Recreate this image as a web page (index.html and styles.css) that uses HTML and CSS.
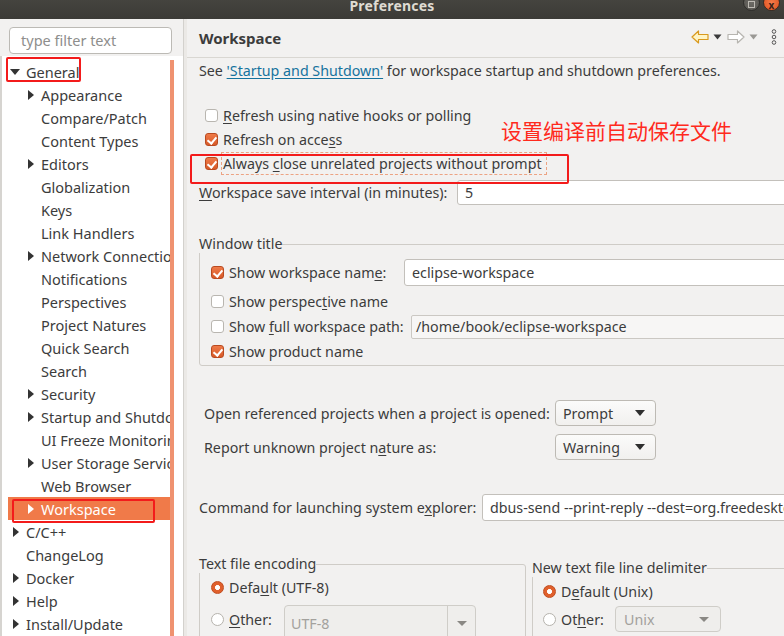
FILE: index.html
```html
<!DOCTYPE html>
<html lang="en">
<head>
<meta charset="utf-8">
<title>Preferences</title>
<link rel="stylesheet" href="styles.css">
</head>
<body>
<div class="window">
  <div class="titlebar">
    <span class="title">Preferences</span>
    <div class="wm-buttons">
      <span class="wm-btn wm-max"><span class="wm-square"></span></span>
      <span class="wm-btn wm-close">x</span>
    </div>
  </div>
  <div class="main">
    <aside class="sidebar">
      <div class="filter-area"><div class="filter">type filter text</div></div>
      <div class="tree">
        <ul class="rows">
          <li class="row l0 open"><span class="tw"></span>General</li>
          <li class="row l1"><span class="tw"></span>Appearance</li>
          <li class="row l1"><span class="tw none"></span>Compare/Patch</li>
          <li class="row l1"><span class="tw none"></span>Content Types</li>
          <li class="row l1"><span class="tw"></span>Editors</li>
          <li class="row l1"><span class="tw none"></span>Globalization</li>
          <li class="row l1"><span class="tw none"></span>Keys</li>
          <li class="row l1"><span class="tw none"></span>Link Handlers</li>
          <li class="row l1"><span class="tw"></span>Network Connections</li>
          <li class="row l1"><span class="tw none"></span>Notifications</li>
          <li class="row l1"><span class="tw none"></span>Perspectives</li>
          <li class="row l1"><span class="tw none"></span>Project Natures</li>
          <li class="row l1"><span class="tw none"></span>Quick Search</li>
          <li class="row l1"><span class="tw none"></span>Search</li>
          <li class="row l1"><span class="tw"></span>Security</li>
          <li class="row l1"><span class="tw"></span>Startup and Shutdown</li>
          <li class="row l1"><span class="tw none"></span>UI Freeze Monitoring</li>
          <li class="row l1"><span class="tw"></span>User Storage Service</li>
          <li class="row l1"><span class="tw none"></span>Web Browser</li>
          <li class="row l1 selected"><span class="tw"></span>Workspace</li>
          <li class="row l0"><span class="tw"></span>C/C++</li>
          <li class="row l0"><span class="tw none"></span>ChangeLog</li>
          <li class="row l0"><span class="tw"></span>Docker</li>
          <li class="row l0"><span class="tw"></span>Help</li>
          <li class="row l0"><span class="tw"></span>Install/Update</li>
        </ul>
        <div class="vscroll"></div>
      </div>
    </aside>
    <div class="sash"></div>
    <section class="page">
      <div class="page-header">
        <span class="page-title">Workspace</span>
        <div class="toolbar">
          <svg class="tb-arrow" width="18" height="14" viewBox="0 0 18 14"><path d="M1 7 L7.5 1 V4.5 H17 V9.5 H7.5 V13 Z" fill="#fff4c4" stroke="#d99a1e" stroke-width="1.2" stroke-linejoin="round"/></svg>
          <svg class="tb-drop" width="9" height="6" viewBox="0 0 9 6"><path d="M0.5 0.5 H8.5 L4.5 5.5 Z" fill="#3a3a3a"/></svg>
          <svg class="tb-arrow" width="18" height="14" viewBox="0 0 18 14"><path d="M17 7 L10.5 1 V4.5 H1 V9.5 H10.5 V13 Z" fill="#ffffff" stroke="#b7b5b0" stroke-width="1.2" stroke-linejoin="round"/></svg>
          <svg class="tb-drop" width="9" height="6" viewBox="0 0 9 6"><path d="M0.5 0.5 H8.5 L4.5 5.5 Z" fill="#9a9894"/></svg>
          <svg class="tb-menu" width="6" height="16" viewBox="0 0 6 16"><circle cx="3" cy="2.5" r="1.8" fill="none" stroke="#555" stroke-width="1"/><circle cx="3" cy="8" r="1.8" fill="none" stroke="#555" stroke-width="1"/><circle cx="3" cy="13.5" r="1.8" fill="none" stroke="#555" stroke-width="1"/></svg>
        </div>
      </div>
      <div class="content">
        <p class="see">See <a class="link">'Startup and Shutdown'</a> for workspace startup and shutdown preferences.</p>
        <div class="checks">
          <div class="ck-row"><span class="cb"></span><span><u>R</u>efresh using native hooks or polling</span></div>
          <div class="ck-row"><span class="cb on"></span><span>Refresh on acce<u>s</u>s</span></div>
          <div class="ck-row"><span class="cb on"></span><span class="focus">Always <u>c</u>lose unrelated projects without prompt</span></div>
        </div>
        <div class="save-row">
          <span class="save-label"><u>W</u>orkspace save interval (in minutes):</span>
          <span class="input save-input">5</span>
        </div>
        <fieldset class="group wt">
          <legend>Window title</legend>
          <div class="wt-row r1"><span class="cb on"></span><span class="wt-label l-name">Show workspace nam<u>e</u>:</span><span class="input wt-input">eclipse-workspace</span></div>
          <div class="wt-row r2"><span class="cb"></span><span>Show perspec<u>t</u>ive name</span></div>
          <div class="wt-row r3"><span class="cb"></span><span class="wt-label l-path">Show <u>f</u>ull workspace path:</span><span class="input wt-input path">/home/book/eclipse-workspace</span></div>
          <div class="wt-row r4"><span class="cb on"></span><span>Show product name</span></div>
        </fieldset>
        <div class="combos">
          <span class="combo-label">Open referenced projects when a project is opened:</span>
          <span class="combo"><span>Prompt</span><span class="caret"></span></span>
          <span class="combo-label">Report unknown project n<u>a</u>ture as:</span>
          <span class="combo"><span>Warning</span><span class="caret"></span></span>
        </div>
        <div class="cmd-row">
          <span class="cmd-label">Command for launching system e<u>x</u>plorer:</span>
          <span class="input cmd-input">dbus-send --print-reply --dest=org.freedesktop.FileManager1</span>
        </div>
        <div class="enc-groups">
          <fieldset class="group enc">
            <legend>Text file encoding</legend>
            <div class="rd-row first"><span class="rb on"></span><span>Defa<u>u</u>lt (UTF-8)</span></div>
            <div class="rd-row second"><span class="rb"></span><span class="other-label"><u>O</u>ther:</span><span class="dcombo utf"><span>UTF-8</span><span class="dbtn"><span class="caret grey"></span></span></span></div>
          </fieldset>
          <fieldset class="group delim">
            <legend>New text file line delimiter</legend>
            <div class="rd-row first"><span class="rb on"></span><span>D<u>e</u>fault (Unix)</span></div>
            <div class="rd-row"><span class="rb"></span><span class="other-label2">Ot<u>h</u>er:</span><span class="dcombo unix"><span>Unix</span><span class="caret grey"></span></span></div>
          </fieldset>
        </div>
      </div>
    </section>
  </div>
  <div class="mark mark-general"></div>
  <div class="mark mark-workspace"></div>
  <div class="mark mark-always"></div>
  <div class="note">设置编译前自动保存文件</div>
</div>
</body>
</html>
```
FILE: styles.css
```css
* { box-sizing: border-box; }
html, body { margin: 0; padding: 0; }
body {
  width: 784px; height: 636px; overflow: hidden;
  font-family: "Noto Sans", "DejaVu Sans", sans-serif;
  font-size: 14px; color: #3c3c3c; background: #f2f1f0;
}
u { text-decoration: underline; text-underline-offset: 2px; }

.window { position: relative; width: 784px; height: 636px; display: flex; flex-direction: column; }

/* title bar */
.titlebar {
  position: relative; height: 19px; flex: none;
  background: linear-gradient(#45443f, #3b3a36);
  display: flex; justify-content: center;
}
.title { color: #dfdbd2; font-weight: bold; font-size: 14px; line-height: 12px; letter-spacing: 0.2px; }
.wm-buttons { position: absolute; right: 4px; top: -6px; display: flex; gap: 3px; }
.wm-btn { width: 17px; height: 17px; border-radius: 50%; display: flex; align-items: center; justify-content: center; }
.wm-max { background: radial-gradient(#6d6b66, #55534e); border: 1px solid #2e2d2a; }
.wm-square { width: 7px; height: 7px; border: 1px solid #bdbab3; margin-top: 3px; }
.wm-close { background: radial-gradient(#f47b4a, #df4f1c); border: 1px solid #3a2a22; color: #3a2118; font-size: 10px; font-weight: bold; line-height: 10px; padding-top: 5px; }

.main { flex: 1; display: flex; min-height: 0; }

/* sidebar */
.sidebar { width: 183px; flex: none; display: flex; flex-direction: column; background: #f2f1f0; }
.filter-area { height: 37px; flex: none; padding: 8px 11px 0 9px; }
.filter {
  height: 27px; border: 1px solid #bcbab5; border-radius: 4px; background: #fff;
  color: #8e8e8c; font-size: 14.5px; line-height: 24px; padding-left: 11px;
}
.tree { position: relative; flex: 1; background: #fff; border-left: 2px solid #d6d4d0; overflow: hidden; }
.rows { list-style: none; margin: 4px 0 0 6px; padding: 0; width: 166px; overflow: hidden; }
.row { height: 23px; display: flex; align-items: center; white-space: nowrap; font-size: 14.5px; color: #3c3c3c; }
.row.l0 { padding-left: 5px; }
.row.l1 { padding-left: 20px; }
.tw { width: 13px; flex: none; height: 10px; position: relative; }
.tw::before {
  content: ""; position: absolute; left: 0; top: 0;
  border-left: 6px solid #333; border-top: 5px solid transparent; border-bottom: 5px solid transparent;
}
.tw.none::before { display: none; }
.row.open { padding-left: 2px; }
.row.open .tw { width: 16px; }
.row.open .tw::before { top: 2px; border-left: 5px solid transparent; border-right: 5px solid transparent; border-top: 6px solid #333; border-bottom: 0; }
.row.selected { background: #f07a49; color: #fff; }
.row.selected .tw::before { border-left-color: #fff; }
.vscroll { position: absolute; left: 168px; top: 4px; width: 4px; bottom: 0; background: #ef9270; }

.sash { width: 4px; flex: none; background: #ebe9e6; border-left: 1px solid #d3d1cd; }

/* page */
.page { flex: 1; min-width: 0; overflow: hidden; background: #f2f1f0; display: flex; flex-direction: column; font-size: 14.25px; }
.page-header {
  height: 39px; flex: none; border-bottom: 1px solid #d9d7d2;
  display: flex; align-items: center; justify-content: space-between; padding: 0 7px 0 12px;
}
.page-title { font-weight: bold; font-size: 15px; color: #3c3c3c; margin-top: -1px; }
.toolbar { display: flex; align-items: center; margin-top: -2px; }
.tb-drop { margin-left: 4px; margin-right: 5px; }
.tb-menu { margin-left: 8px; }

.content { width: 640px; padding-left: 12px; }
.see { margin: 4px 0 0; line-height: 18px; white-space: nowrap; }
.link { color: #16739e; text-decoration: underline; text-underline-offset: 2px; }

.checks { margin-top: 23px; padding-left: 6px; }
.ck-row { height: 24px; display: flex; align-items: center; white-space: nowrap; }
.cb {
  width: 13px; height: 13px; flex: none; border: 1px solid #b9b6b0; border-radius: 3px;
  background: #fff; margin-right: 5px; position: relative;
}
.cb.on { background: linear-gradient(#ef7a48, #d75a28); border-color: #b94a20; }
.cb.on::after {
  content: ""; position: absolute; left: 3px; top: 1px; width: 4px; height: 7px;
  border-right: 2px solid #fff; border-bottom: 2px solid #fff; transform: rotate(40deg);
}
.focus { outline: 1px dashed #eca383; outline-offset: 1px; padding-right: 3px; }

.save-row { margin-top: 5px; height: 25px; display: flex; align-items: center; white-space: nowrap; }
.save-label { width: 258px; flex: none; }
.input {
  display: flex; align-items: center; background: #fff; border: 1px solid #c3c0bb; border-radius: 3px;
  padding-left: 7px; white-space: nowrap; overflow: hidden;
}
.save-input { flex: 1; height: 25px; }

.group { border: 1px solid #cfccc7; border-radius: 3px; margin: 0; padding: 0; min-width: 0; }
.group legend { padding: 0; line-height: 18px; }
.wt { margin-top: 30px; padding: 6px 0 1px 11px; }
.wt legend { margin-left: -12px; }
.wt-row { display: flex; align-items: center; white-space: nowrap; }
.wt-row.r1 { height: 27px; }
.wt-row.r2 { height: 27px; margin-top: 2px; }
.wt-row.r3 { height: 23px; }
.wt-row.r4 { height: 26px; }
.wt-row .cb { margin-right: 5px; }
.l-name { width: 175px; flex: none; }
.l-path { width: 182px; flex: none; }
.wt-input { flex: 1; height: 27px; }
.wt-input.path { height: 24px; background: #f7f6f5; border-color: #cbc8c3; border-radius: 2px; padding-left: 4px; }

.combos { margin-top: 34px; display: grid; grid-template-columns: 356px 101px; row-gap: 8px; align-items: center; }
.combo-label { padding-left: 5px; white-space: nowrap; }
.combo {
  height: 26px; display: flex; align-items: center; justify-content: space-between;
  background: linear-gradient(#fbfbfa, #f1f0ee); border: 1px solid #bdbab4; border-radius: 4px;
  padding: 0 10px 0 7px;
}
.caret { width: 0; height: 0; border-left: 5px solid transparent; border-right: 5px solid transparent; border-top: 6px solid #2f2f2f; }
.caret.grey { border-top-color: #8a8884; border-top-width: 5px; }

.cmd-row { margin-top: 34px; display: flex; align-items: center; white-space: nowrap; }
.cmd-label { width: 283px; flex: none; }
.cmd-input { flex: 1; height: 27px; }

.enc-groups { margin-top: 34px; display: flex; gap: 6px; align-items: flex-start; }
.enc { width: 327px; flex: none; padding: 3px 0 0 11px; height: 100px; }
.enc legend { margin-left: -12px; }
.delim { flex: 1; margin-top: 4px; padding: 3px 0 0 10px; height: 100px; }
.delim legend { margin-left: -11px; }
.rd-row { display: flex; align-items: center; white-space: nowrap; height: 30px; }
.rd-row.first { height: 22px; }
.rd-row.second { height: 43px; }
.delim .rd-row.first { margin-bottom: 2px; }
.rb {
  width: 13px; height: 13px; flex: none; border-radius: 50%; border: 1px solid #b6b3ad; background: #fff; margin-right: 5px;
}
.rb.on { background: radial-gradient(circle, #fff 0 2.2px, #e0602c 2.6px); border-color: #c04d20; }
.other-label { width: 55px; flex: none; }
.other-label2 { width: 54px; flex: none; }
.dcombo {
  display: flex; align-items: center; justify-content: space-between; color: #a3a19d;
  background: #efeeec; border: 1px solid #cfcdc8; border-radius: 4px;
}
.dcombo.utf { width: 192px; height: 36px; margin-top: 7px; padding-left: 6px; }
.dbtn { width: 28px; height: 100%; border-left: 1px solid #cfcdc8; display: flex; align-items: center; justify-content: center; }
.dcombo.unix { width: 106px; height: 26px; padding: 0 11px 0 8px; }

/* annotations */
.mark { position: absolute; border: 2px solid #f31b1b; border-radius: 2px; }
.mark-general { left: 6px; top: 57px; width: 75px; height: 25px; }
.mark-workspace { left: 12px; top: 499px; width: 143px; height: 24px; }
.mark-always { left: 190px; top: 154px; width: 379px; height: 30px; }
.note {
  position: absolute; left: 501px; top: 116px; color: #ff2a1d;
  font-family: "Noto Sans CJK SC", sans-serif; font-size: 21px; line-height: 28px; white-space: nowrap;
}
```
